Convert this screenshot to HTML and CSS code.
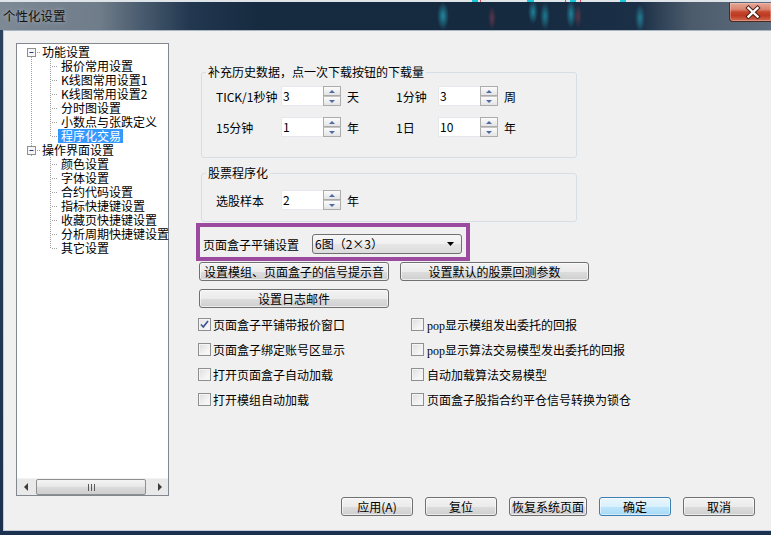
FILE: index.html
```html
<!DOCTYPE html>
<html>
<head>
<meta charset="utf-8">
<title>个性化设置</title>
<link rel="stylesheet" href="styles.css">
</head>
<body>
<div class="window">
  <div class="deskstrip"></div>
  <div class="titlebar">
    <span class="title">个性化设置</span>
    <div class="close">
      <svg width="42" height="19" viewBox="0 0 42 19">
        <path d="M19.5 5 L28.5 13.5 M28.5 5 L19.5 13.5" stroke="#4a1c12" stroke-width="4.4" stroke-linecap="square"/>
        <path d="M19.5 5 L28.5 13.5 M28.5 5 L19.5 13.5" stroke="#ffffff" stroke-width="2.4" stroke-linecap="square"/>
      </svg>
    </div>
  </div>
  <div class="client">
    <div class="tree">
      <div class="tree-body">
        <div class="trow">
          <svg class="conn-top" width="23" height="14" viewBox="0 0 23 14">
            <rect x="10.5" y="3.5" width="8" height="8" fill="#f6f6f6" stroke="#8f8f8f"/>
            <path d="M12.5 7.5 H16.5" stroke="#2b3b7a"/>
            <path d="M20 7.5 H24" class="dot"/>
            <path d="M14.5 12 V14" class="dot"/>
          </svg>
          <span class="tt top">功能设置</span>
        </div>
        <div class="trow">
          <svg class="conn" width="41" height="14" viewBox="0 0 41 14">
            <path d="M14.5 0 V14 M33.5 0 V14 M35 7.5 H41" class="dot"/>
          </svg>
          <span class="tt">报价常用设置</span>
        </div>
        <div class="trow">
          <svg class="conn" width="41" height="14" viewBox="0 0 41 14">
            <path d="M14.5 0 V14 M33.5 0 V14 M35 7.5 H41" class="dot"/>
          </svg>
          <span class="tt">K线图常用设置1</span>
        </div>
        <div class="trow">
          <svg class="conn" width="41" height="14" viewBox="0 0 41 14">
            <path d="M14.5 0 V14 M33.5 0 V14 M35 7.5 H41" class="dot"/>
          </svg>
          <span class="tt">K线图常用设置2</span>
        </div>
        <div class="trow">
          <svg class="conn" width="41" height="14" viewBox="0 0 41 14">
            <path d="M14.5 0 V14 M33.5 0 V14 M35 7.5 H41" class="dot"/>
          </svg>
          <span class="tt">分时图设置</span>
        </div>
        <div class="trow">
          <svg class="conn" width="41" height="14" viewBox="0 0 41 14">
            <path d="M14.5 0 V14 M33.5 0 V14 M35 7.5 H41" class="dot"/>
          </svg>
          <span class="tt">小数点与张跌定义</span>
        </div>
        <div class="trow">
          <svg class="conn" width="41" height="14" viewBox="0 0 41 14">
            <path d="M14.5 0 V14 M33.5 0 V8 M35 7.5 H41" class="dot"/>
          </svg>
          <span class="tt sel">程序化交易</span>
        </div>
        <div class="trow">
          <svg class="conn-top" width="23" height="14" viewBox="0 0 23 14">
            <path d="M14.5 0 V3" class="dot"/>
            <rect x="10.5" y="3.5" width="8" height="8" fill="#f6f6f6" stroke="#8f8f8f"/>
            <path d="M12.5 7.5 H16.5" stroke="#2b3b7a"/>
            <path d="M20 7.5 H24" class="dot"/>
            <path d="M14.5 12 V14" class="dot"/>
          </svg>
          <span class="tt top">操作界面设置</span>
        </div>
        <div class="trow">
          <svg class="conn" width="41" height="14" viewBox="0 0 41 14">
            <path d="M33.5 0 V14 M35 7.5 H41" class="dot"/>
          </svg>
          <span class="tt">颜色设置</span>
        </div>
        <div class="trow">
          <svg class="conn" width="41" height="14" viewBox="0 0 41 14">
            <path d="M33.5 0 V14 M35 7.5 H41" class="dot"/>
          </svg>
          <span class="tt">字体设置</span>
        </div>
        <div class="trow">
          <svg class="conn" width="41" height="14" viewBox="0 0 41 14">
            <path d="M33.5 0 V14 M35 7.5 H41" class="dot"/>
          </svg>
          <span class="tt">合约代码设置</span>
        </div>
        <div class="trow">
          <svg class="conn" width="41" height="14" viewBox="0 0 41 14">
            <path d="M33.5 0 V14 M35 7.5 H41" class="dot"/>
          </svg>
          <span class="tt">指标快捷键设置</span>
        </div>
        <div class="trow">
          <svg class="conn" width="41" height="14" viewBox="0 0 41 14">
            <path d="M33.5 0 V14 M35 7.5 H41" class="dot"/>
          </svg>
          <span class="tt">收藏页快捷键设置</span>
        </div>
        <div class="trow">
          <svg class="conn" width="41" height="14" viewBox="0 0 41 14">
            <path d="M33.5 0 V14 M35 7.5 H41" class="dot"/>
          </svg>
          <span class="tt">分析周期快捷键设置</span>
        </div>
        <div class="trow">
          <svg class="conn" width="41" height="14" viewBox="0 0 41 14">
            <path d="M33.5 0 V8 M35 7.5 H41" class="dot"/>
          </svg>
          <span class="tt">其它设置</span>
        </div>
      </div>
      <div class="hscroll">
        <div class="sbtn">
          <svg width="5" height="8" viewBox="0 0 5 8"><path d="M4 0 V8 L0 4 Z" fill="#3c3c3c"/></svg>
        </div>
        <div class="thumb">
          <svg width="7" height="7" viewBox="0 0 7 7"><path d="M0.5 0 V7 M3.5 0 V7 M6.5 0 V7" stroke="#5a5a5a"/></svg>
        </div>
        <div class="track"></div>
        <div class="sbtn">
          <svg width="5" height="8" viewBox="0 0 5 8"><path d="M1 0 V8 L5 4 Z" fill="#3c3c3c"/></svg>
        </div>
      </div>
    </div>

    <div class="main">
      <fieldset class="group g1">
        <legend>补充历史数据，点一次下载按钮的下载量</legend>
        <div class="frow">
          <span class="flabel">TICK/1秒钟</span>
          <span class="spin"><span class="edit">3</span><span class="sbs"><span class="sb"><i class="up"></i></span><span class="sb"><i class="dn"></i></span></span></span>
          <span class="unit">天</span>
          <span class="flabel2">1分钟</span>
          <span class="spin"><span class="edit">3</span><span class="sbs"><span class="sb"><i class="up"></i></span><span class="sb"><i class="dn"></i></span></span></span>
          <span class="unit">周</span>
        </div>
        <div class="frow r2">
          <span class="flabel">15分钟</span>
          <span class="spin"><span class="edit">1</span><span class="sbs"><span class="sb"><i class="up"></i></span><span class="sb"><i class="dn"></i></span></span></span>
          <span class="unit">年</span>
          <span class="flabel2">1日</span>
          <span class="spin"><span class="edit">10</span><span class="sbs"><span class="sb"><i class="up"></i></span><span class="sb"><i class="dn"></i></span></span></span>
          <span class="unit">年</span>
        </div>
      </fieldset>

      <fieldset class="group g2">
        <legend>股票程序化</legend>
        <div class="frow">
          <span class="flabel">选股样本</span>
          <span class="spin"><span class="edit">2</span><span class="sbs"><span class="sb"><i class="up"></i></span><span class="sb"><i class="dn"></i></span></span></span>
          <span class="unit">年</span>
        </div>
      </fieldset>

      <div class="highlight">
        <span class="hl-label">页面盒子平铺设置</span>
        <div class="combo">
          <span>6图（2×3）</span>
          <svg width="7" height="4" viewBox="0 0 7 4"><path d="M0 0 H7 L3.5 4 Z" fill="#000"/></svg>
        </div>
      </div>

      <div class="btnrow">
        <button class="btn wide">设置模组、页面盒子的信号提示音</button>
        <button class="btn wide2">设置默认的股票回测参数</button>
      </div>
      <div class="btnrow second">
        <button class="btn wide">设置日志邮件</button>
      </div>

      <div class="checks">
        <label class="chk"><span class="box checked"><svg width="11" height="11" viewBox="0 0 11 11"><path d="M2 5.5 L4.3 8 L9 2" stroke="#3a5596" stroke-width="1.7" fill="none"/></svg></span><span>页面盒子平铺带报价窗口</span></label>
        <label class="chk c2"><span class="box"></span><span><span class="latin">pop</span>显示模组发出委托的回报</span></label>
        <label class="chk"><span class="box"></span><span>页面盒子绑定账号区显示</span></label>
        <label class="chk c2"><span class="box"></span><span><span class="latin">pop</span>显示算法交易模型发出委托的回报</span></label>
        <label class="chk"><span class="box"></span><span>打开页面盒子自动加载</span></label>
        <label class="chk c2"><span class="box"></span><span>自动加载算法交易模型</span></label>
        <label class="chk"><span class="box"></span><span>打开模组自动加载</span></label>
        <label class="chk c2"><span class="box"></span><span>页面盒子股指合约平仓信号转换为锁仓</span></label>
      </div>

      <div class="footer">
        <button class="btn fb">应用(A)</button>
        <button class="btn fb">复位</button>
        <button class="btn fb wider">恢复系统页面</button>
        <button class="btn fb default">确定</button>
        <button class="btn fb">取消</button>
      </div>
    </div>
  </div>
</div>
</body>
</html>
```

FILE: styles.css
```css
* { box-sizing: border-box; }
html, body { margin: 0; padding: 0; }
body {
  width: 771px;
  height: 535px;
  overflow: hidden;
  background: #1d3651;
  font-family: "Noto Sans CJK SC", "Noto Sans", sans-serif;
  font-size: 12px;
  color: #000;
}
.window {
  width: 771px;
  height: 535px;
  display: flex;
  flex-direction: column;
  background: linear-gradient(180deg, #2a4460 0%, #1f3954 60%, #1a3250 100%);
}
.deskstrip {
  height: 2px;
  flex: none;
  background:
    linear-gradient(90deg, transparent 472px, #19c6d8 472px, #19c6d8 478px, transparent 478px,
      transparent 480px, #d8505a 480px, #d8505a 481px, transparent 481px,
      transparent 527px, #19c6d8 527px, #19c6d8 534px, transparent 534px,
      transparent 565px, #d8505a 565px, #d8505a 566px, transparent 566px,
      transparent 570px, #19c6d8 570px, #19c6d8 576px, transparent 576px,
      transparent 580px, #d8505a 580px, #d8505a 581px, transparent 581px,
      transparent 620px, #19c6d8 620px, #19c6d8 626px, transparent 626px),
    #dfe4e9;
}
.titlebar {
  height: 28px;
  flex: none;
  display: flex;
  align-items: flex-start;
  padding-left: 3px;
  background:
    radial-gradient(6px 14px at 443px 14px, rgba(40, 200, 220, 0.6), transparent),
    radial-gradient(5px 12px at 533px 10px, rgba(40, 200, 220, 0.55), transparent),
    radial-gradient(5px 14px at 545px 14px, rgba(40, 200, 220, 0.5), transparent),
    radial-gradient(5px 14px at 571px 12px, rgba(40, 200, 220, 0.55), transparent),
    radial-gradient(5px 14px at 640px 16px, rgba(40, 200, 220, 0.5), transparent),
    radial-gradient(4px 12px at 492px 16px, rgba(200, 70, 90, 0.4), transparent),
    radial-gradient(4px 12px at 578px 14px, rgba(200, 70, 90, 0.35), transparent),
    linear-gradient(90deg, #7d8995 0px, #6f7c89 100px, #4a5c6f 140px, #223850 190px, #162a40 260px, #15293f 520px, #1b3047 640px, #4b5b6c 690px, #5f6e7e 771px);
}
.title {
  margin-top: 7px;
  line-height: 14px;
  font-size: 12.5px;
  color: #111;
  text-shadow: 0 0 5px rgba(255, 255, 255, 0.45);
}
.close {
  margin-left: auto;
  margin-top: 1px;
  width: 42px;
  height: 19px;
  border: 1px solid #4a2a24;
  border-right: none;
  border-top: none;
  border-radius: 0 0 0 4px;
  background: linear-gradient(180deg, #e7a797 0%, #d98571 35%, #c6452d 50%, #bd3a22 70%, #d26a52 100%);
  box-shadow: inset 0 0 0 1px rgba(255, 220, 210, 0.35);
  display: flex;
}
.close svg { display: block; margin-left: -1px; }

.client {
  flex: 1;
  margin: 0 0 4px 3px;
  border-left: 1px solid #c2ccd6;
  border-top: 1px solid #a9b5c1;
  border-bottom: 1px solid #c2ccd6;
  background: #f0f0f0;
  display: flex;
  align-items: flex-start;
  padding: 12px 0 14px 12px;
}

/* tree */
.tree {
  width: 153px;
  height: 453px;
  flex: none;
  border: 1px solid #828790;
  background: #fff;
  display: flex;
  flex-direction: column;
}
.tree-body {
  flex: 1;
  padding-top: 1px;
}
.trow {
  height: 14px;
  display: flex;
  align-items: center;
}
.trow svg { display: block; flex: none; }
.dot {
  stroke: #a0a0a0;
  stroke-width: 1;
  stroke-dasharray: 1 1;
  fill: none;
}
.tt {
  line-height: 14px;
  height: 14px;
  padding: 0 2px 0 3px;
  white-space: nowrap;
}
.tt.top { padding-left: 2px; }
.tt.sel { background: #3399ff; color: #fff; }

.hscroll {
  height: 17px;
  flex: none;
  display: flex;
  background: #e9e9e9;
  border-top: 1px solid #f2f2f2;
}
.sbtn {
  width: 19px;
  display: flex;
  align-items: center;
  justify-content: center;
}
.sbtn:last-child { width: 17px; }
.thumb {
  width: 110px;
  border: 1px solid #8e8f8f;
  border-radius: 2px;
  background: linear-gradient(180deg, #f4f4f4 0%, #e8e8e8 45%, #d9d9d9 55%, #cfcfcf 100%);
  display: flex;
  align-items: center;
  justify-content: center;
}
.thumb svg { display: block; }
.track { flex: 1; }

/* main column */
.main {
  flex: 1;
  align-self: stretch;
  margin-left: 27px;
  display: flex;
  flex-direction: column;
}
.group {
  margin: 0 0 0 5px;
  width: 376px;
  border: 1px solid #d5dfe5;
  border-radius: 3px;
  min-inline-size: 0;
}
.group legend {
  padding: 0 2px;
  margin-left: 4px;
  line-height: 14px;
  font-size: 12px;
}
.g1 { margin-top: 22px; padding: 7px 0 20px 0; }
.g2 { margin-top: 8px; padding: 10px 0 11px 0; }
.frow {
  display: flex;
  align-items: center;
  height: 20px;
  padding-left: 14px;
}
.frow.r2 { margin-top: 11px; }
.flabel { width: 65px; white-space: nowrap; }
.flabel2 { width: 42px; white-space: nowrap; }
.unit { margin-left: 6px; width: 49px; }
.spin {
  display: flex;
  width: 60px;
  height: 20px;
  flex: none;
}
.edit {
  width: 42px;
  height: 20px;
  background: #fff;
  border: 1px solid #e4e8ec;
  border-right: none;
  padding-left: 1px;
  line-height: 18px;
}
.sbs {
  width: 18px;
  display: flex;
  flex-direction: column;
}
.sb {
  height: 10px;
  border: 1px solid #acacac;
  background: linear-gradient(180deg, #fbfbfb, #e4e4e4);
  display: flex;
  align-items: center;
  justify-content: center;
}
.sb + .sb { border-top-color: #c4c4c4; }
.up, .dn {
  display: block;
  width: 0;
  height: 0;
  border-left: 3px solid transparent;
  border-right: 3px solid transparent;
}
.up { border-bottom: 3px solid #4e6aa6; }
.dn { border-top: 3px solid #4e6aa6; }

.highlight {
  margin-top: 1px;
  width: 274px;
  height: 38px;
  border: 4px solid #9c4a9f;
  display: flex;
  align-items: center;
  padding: 4px 0 0 3px;
}
.hl-label { width: 96px; white-space: nowrap; }
.combo {
  margin-left: 13px;
  width: 150px;
  height: 20px;
  border: 1px solid #707070;
  border-radius: 3px;
  background: linear-gradient(180deg, #f6f6f6 0%, #f0f0f0 50%, #e6e6e6 50%, #dcdcdc 100%);
  display: flex;
  align-items: center;
  justify-content: space-between;
  padding: 0 7px 0 2px;
  line-height: 18px;
}
.combo svg { display: block; }

.btn {
  font-family: inherit;
  font-size: 12px;
  color: #000;
  height: 19px;
  padding: 0;
  line-height: 17px;
  border: 1px solid #707070;
  border-radius: 3px;
  background: linear-gradient(180deg, #f2f2f2 0%, #ebebeb 50%, #dddddd 50%, #cfcfcf 100%);
  box-shadow: inset 0 0 0 1px rgba(255, 255, 255, 0.6);
  white-space: nowrap;
}
.btnrow { display: flex; margin-top: 1px; padding-left: 3px; }
.btnrow.second { margin-top: 8px; }
.btn.wide { width: 190px; }
.btn.wide2 { width: 189px; margin-left: 11px; }

.checks {
  margin-top: 4px;
  margin-left: 2px;
  display: grid;
  grid-template-columns: 213px auto;
  grid-auto-rows: 25px;
}
.chk {
  display: flex;
  align-items: center;
  white-space: nowrap;
}
.latin { font-family: "Liberation Serif", "Noto Sans CJK SC", serif; font-size: 12px; }
.box {
  width: 13px;
  height: 13px;
  flex: none;
  border: 1px solid #8e8f8f;
  background: linear-gradient(135deg, #dcdcdc 0%, #f2f2f2 60%, #fbfbfb 100%);
  box-shadow: inset 0 0 0 1px #f4f4f4;
  margin-right: 2px;
  display: flex;
  align-items: center;
  justify-content: center;
}
.box.checked { background: linear-gradient(135deg, #e6e6e6 0%, #f8f8f8 100%); }
.box svg { display: block; }
.chk.c2 .box { margin-right: 3px; }

.footer {
  margin-top: auto;
  display: flex;
  gap: 12px;
  padding-left: 145px;
}
.btn.fb { width: 72px; }
.btn.fb.wider { width: 78px; }
.btn.default {
  border-color: #3c7fb1;
  background: linear-gradient(180deg, #eaf6fd 0%, #d9f0fc 50%, #bee6fd 50%, #a7d9f5 100%);
  box-shadow: inset 0 0 0 1px rgba(255, 255, 255, 0.5);
}
```
